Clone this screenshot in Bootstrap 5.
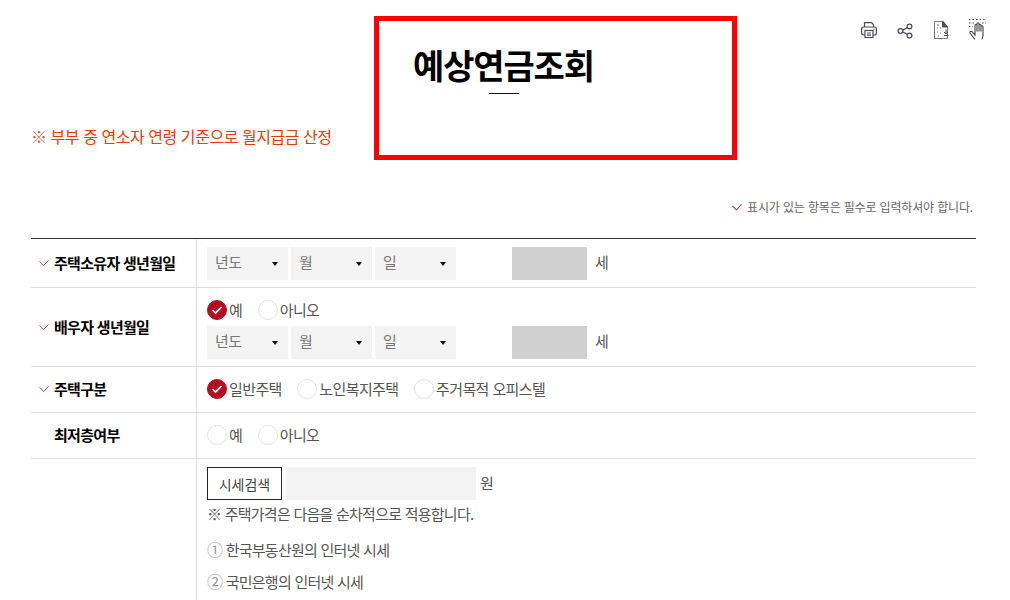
<!DOCTYPE html>
<html lang="ko">
<head>
<meta charset="utf-8">
<title>예상연금조회</title>
<link href="https://cdn.jsdelivr.net/npm/bootstrap@5.3.0/dist/css/bootstrap.min.css" rel="stylesheet">
<style>
html,body{height:600px;overflow:hidden}
body{font-family:"Noto Sans CJK KR","Noto Sans",sans-serif;font-size:15px;color:#555;background:#fff;letter-spacing:-.6px}
.pg{padding:16px 34px 0 31px}
.top-left{width:343px;flex:none;padding-top:108px;font-size:16px;line-height:24px;color:#ee3a00;letter-spacing:-.45px}
.top-left span{color:#c0694f}
.title-box{width:363px;height:144px;flex:none;border:5px solid #f00;padding:21px 0 0 34px}
.title-box h1{font-size:34px;line-height:46px;font-weight:700;color:#000;margin:0;letter-spacing:-1.15px}
.title-box i{display:block;width:30px;height:1px;background:#111;margin:5px 0 0 76px}
.tools{margin-left:auto;margin-right:-13px;gap:16px;height:30px;padding-top:2px}
.req-note{font-size:12px;line-height:18px;color:#666;margin:38px 3px 0 0;gap:5px;letter-spacing:-.16px}
.form-tb{width:945px;margin:22px 0 0;border-top:1px solid #333;table-layout:fixed;border-collapse:separate;border-spacing:0}
.form-tb th,.form-tb td{border-bottom:1px solid #ddd;padding:0;vertical-align:middle}
.form-tb th{width:166px;border-right:1px solid #ddd;font-size:15px;font-weight:700;color:#000;padding-left:8px;letter-spacing:-.7px}
.form-tb th>div{gap:5px;height:20px}
.form-tb td{padding-left:10px}
.form-tb th.th-none{padding-left:23px}
.r1{height:49px}.r2{height:79px}.r3{height:46px}.r4{height:46px}
.form-tb tr.r5 th,.form-tb tr.r5 td{border-bottom:0;height:141px}
.form-tb td.r2-cell{padding-top:5px}
.form-tb .r3 td,.form-tb .r4 td{padding-bottom:2px}
.sel{width:81px;height:33px;background:#f3f3f3;padding:0 8px;color:#777;line-height:29px;position:relative}
.sel::after{content:"";position:absolute;right:10px;top:15px;border:3px solid transparent;border-top:4px solid #111;border-bottom:0}
.sel-row{gap:3px}
.age{width:75px;height:33px;background:#d0d0d0;margin-left:53px;margin-right:5px}
.sel-row>span{padding-bottom:2px}
.rad{width:20px;height:20px;border-radius:50%;border:1px solid #e2e2e2;background:#fff;flex:none;margin-right:2px}
.rad.on{background:#b30f23;border-color:#b30f23;display:flex;align-items:center;justify-content:center}
.rad-row{gap:15.500px;line-height:20px}
.rad-row>div{display:flex;align-items:center}
.r2-radios{margin-bottom:6px}
.btn-price{width:75px;height:33px;border:1px solid #222;border-radius:0;background:#fff;color:#444;font-size:14px;padding:0;line-height:30px}
.price-in{width:190px;height:33px;background:#f3f3f3;margin-left:4px;margin-right:4px}
.notes{letter-spacing:-.75px}
.notes p{margin:0;line-height:20px}
.notes .n1{margin-top:4px}
.notes .n2{margin-top:15px}
.notes .n3{margin-top:11px}
.notes b{font-weight:400;color:#999;font-size:16px}
</style>
</head>
<body>
<div class="pg">
  <div class="d-flex">
    <div class="top-left"><span>※</span> 부부 중 연소자 연령 기준으로 월지급금 산정</div>
    <div class="title-box"><h1>예상연금조회</h1><i></i></div>
    <div class="tools d-flex align-items-start">
      <svg width="20" height="24" viewBox="0 0 20 24" fill="none" stroke="#4a4a55" stroke-width="1.200"><path d="M5.500 9V4.600h7l2 2V9"/><rect x="2.600" y="9" width="14.800" height="8" rx="2"/><rect x="6" y="12.500" width="8" height="7" fill="#fff"/><path d="M8 15h4M8 17.200h4M14.500 11h1"/></svg>
      <svg width="20" height="24" viewBox="0 0 20 24" fill="none" stroke="#4a4a55" stroke-width="1.200"><circle cx="5.500" cy="13" r="2.400"/><circle cx="14.500" cy="8.500" r="2.400"/><circle cx="14.500" cy="17.500" r="2.400"/><path d="M7.700 12l4.700-2.400M7.700 14l4.700 2.400"/></svg>
      <svg width="20" height="24" viewBox="0 0 20 24" fill="none" stroke="#4a4a55" stroke-width="1"><path d="M3.500 3.500h9l4 5.500v11.500h-13z" stroke="#777"/><path d="M11.500 3.500l5 5.500h-5z" fill="#4a4a55"/><path d="M6 7h2M6 10h1M9 10h1M6 14h1M9 15h1M7 18h1" stroke="#666"/><path d="M15 11.500v4M13 14l2 2 2-2M13 17.500h4.500"/></svg>
      <svg width="22" height="24" viewBox="0 0 22 24" fill="none" stroke="#3e3e48" stroke-width="1.100"><path d="M2 1.500h17M2 5h6M15 5h4M2 8.500h4" stroke-dasharray="1.500 2"/><path d="M8 21.500l-5-6.500c-.8-1.300 1-2.400 2-1.300L8 17V7.500c0-1.600 2-1.600 2 0V6c0-1.600 2-1.600 2 0v1.500c0-1.600 2-1.600 2 0V9c0-1.600 2-1.600 2 0v8.500c0 1.700-1 2.500-1 4M10 7.500v6M12 7.500v6M14 8.500v5"/></svg>
    </div>
  </div>
  <div class="req-note d-flex justify-content-end align-items-center">
    <svg width="10" height="8" viewBox="0 0 10 8" fill="none" stroke="#c0404f" stroke-width="1.100"><path d="M.5 3l4 4 5-6"/></svg>
    <span>표시가 있는 항목은 필수로 입력하셔야 합니다.</span>
  </div>
  <table class="form-tb">
    <tbody>
      <tr class="r1">
        <th><div class="d-flex align-items-center"><svg width="10" height="7" viewBox="0 0 10 7" fill="none" stroke="#c0404f" stroke-width="1"><path d="M.5 1.500l4 4 5-5"/></svg><span>주택소유자 생년월일</span></div></th>
        <td><div class="d-flex align-items-center sel-row"><div class="sel">년도</div><div class="sel">월</div><div class="sel">일</div><div class="age"></div><span>세</span></div></td>
      </tr>
      <tr class="r2">
        <th><div class="d-flex align-items-center"><svg width="10" height="7" viewBox="0 0 10 7" fill="none" stroke="#c0404f" stroke-width="1"><path d="M.5 1.500l4 4 5-5"/></svg><span>배우자 생년월일</span></div></th>
        <td class="r2-cell">
          <div class="d-flex rad-row r2-radios">
            <div><span class="rad on"><svg width="12" height="10" viewBox="0 0 12 10" fill="none" stroke="#fff" stroke-width="1.700"><path d="M1.500 5l3 3 6-6"/></svg></span>예</div>
            <div><span class="rad"></span>아니오</div>
          </div>
          <div class="d-flex align-items-center sel-row"><div class="sel">년도</div><div class="sel">월</div><div class="sel">일</div><div class="age"></div><span>세</span></div>
        </td>
      </tr>
      <tr class="r3">
        <th><div class="d-flex align-items-center"><svg width="10" height="7" viewBox="0 0 10 7" fill="none" stroke="#c0404f" stroke-width="1"><path d="M.5 1.500l4 4 5-5"/></svg><span>주택구분</span></div></th>
        <td><div class="d-flex rad-row">
          <div><span class="rad on"><svg width="12" height="10" viewBox="0 0 12 10" fill="none" stroke="#fff" stroke-width="1.700"><path d="M1.500 5l3 3 6-6"/></svg></span>일반주택</div>
          <div><span class="rad"></span>노인복지주택</div>
          <div><span class="rad"></span>주거목적 오피스텔</div>
        </div></td>
      </tr>
      <tr class="r4">
        <th class="th-none"><span>최저층여부</span></th>
        <td><div class="d-flex rad-row">
          <div><span class="rad"></span>예</div>
          <div><span class="rad"></span>아니오</div>
        </div></td>
      </tr>
      <tr class="r5">
        <th></th>
        <td class="align-top pt-2">
          <div class="d-flex align-items-center"><button type="button" class="btn btn-price">시세검색</button><div class="price-in"></div><span>원</span></div>
          <div class="notes">
            <p class="n1">※ 주택가격은 다음을 순차적으로 적용합니다.</p>
            <p class="n2"><b>①</b> 한국부동산원의 인터넷 시세</p>
            <p class="n3"><b>②</b> 국민은행의 인터넷 시세</p>
          </div>
        </td>
      </tr>
    </tbody>
  </table>
</div>
<script src="https://cdn.jsdelivr.net/npm/bootstrap@5.3.0/dist/js/bootstrap.bundle.min.js"></script>
</body>
</html>
